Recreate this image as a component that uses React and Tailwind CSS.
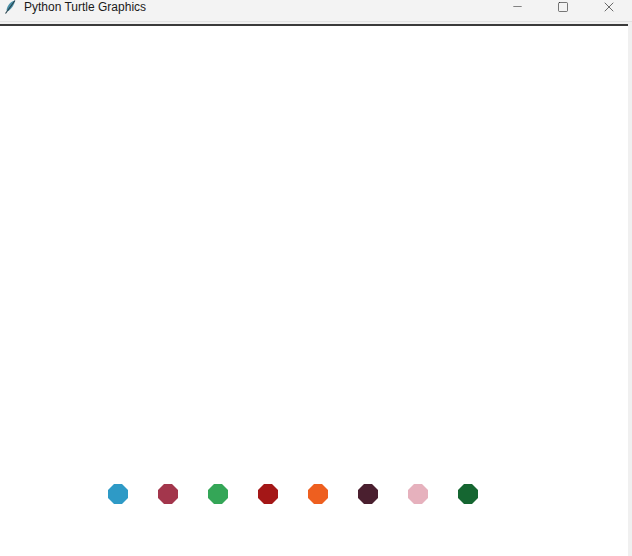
import { Minus, Square, X } from "lucide-react";

const dots = [
  "#2e9ac6",
  "#a3364c",
  "#34a657",
  "#a41717",
  "#ee5f1f",
  "#4a1f2f",
  "#e6b1bd",
  "#156631",
];

function Octagon({ color }) {
  return (
    <svg width="20" height="20" viewBox="0 0 20 20">
      <polygon
        points="6,0 14,0 20,6 20,14 14,20 6,20 0,14 0,6"
        fill={color}
      />
    </svg>
  );
}

function Feather() {
  return (
    <svg width="12" height="14" viewBox="0 0 12 14">
      <path d="M11 0.5 C6.5 1.5 3 5.5 2.5 10.5 L4.5 11 C8 8.5 10.5 4.5 11 0.5 Z" fill="#4a8fa6" />
      <path d="M11 0.5 L1.5 13.5" stroke="#243f4a" strokeWidth="1.1" />
    </svg>
  );
}

export default function App() {
  return (
    <div className="flex h-[556px] w-[632px] flex-col overflow-hidden bg-white font-['Liberation_Sans',sans-serif]">
      <div className="h-[22px] border-b border-[#e2e2e2] bg-[#f3f3f3]">
        <div className="flex h-[13px] items-center">
          <div className="ml-[3px] flex w-[14px] justify-center">
            <Feather />
          </div>
          <span className="ml-[7px] text-[12px] leading-none text-[#1a1a1a]">
            Python Turtle Graphics
          </span>
          <div className="ml-auto flex items-center">
            <div className="flex w-[46px] justify-center">
              <Minus size={13} strokeWidth={1} color="#222" />
            </div>
            <div className="flex w-[46px] justify-center">
              <Square size={12} strokeWidth={1.2} color="#222" />
            </div>
            <div className="flex w-[46px] justify-center">
              <X size={16} strokeWidth={1} color="#222" />
            </div>
          </div>
        </div>
      </div>
      <div className="flex flex-1">
        <div className="flex flex-1 flex-col bg-[#f0f0f0] pt-[2px]">
          <div className="h-[2px] bg-[#3a3a3a]" />
          <div className="flex flex-1 flex-col justify-end bg-white pb-[52px] pl-[108px]">
            <div className="flex gap-[30px]">
              {dots.map((c, i) => (
                <Octagon key={i} color={c} />
              ))}
            </div>
          </div>
        </div>
        <div className="w-[4px] bg-[#f0f0f0]" />
      </div>
    </div>
  );
}
